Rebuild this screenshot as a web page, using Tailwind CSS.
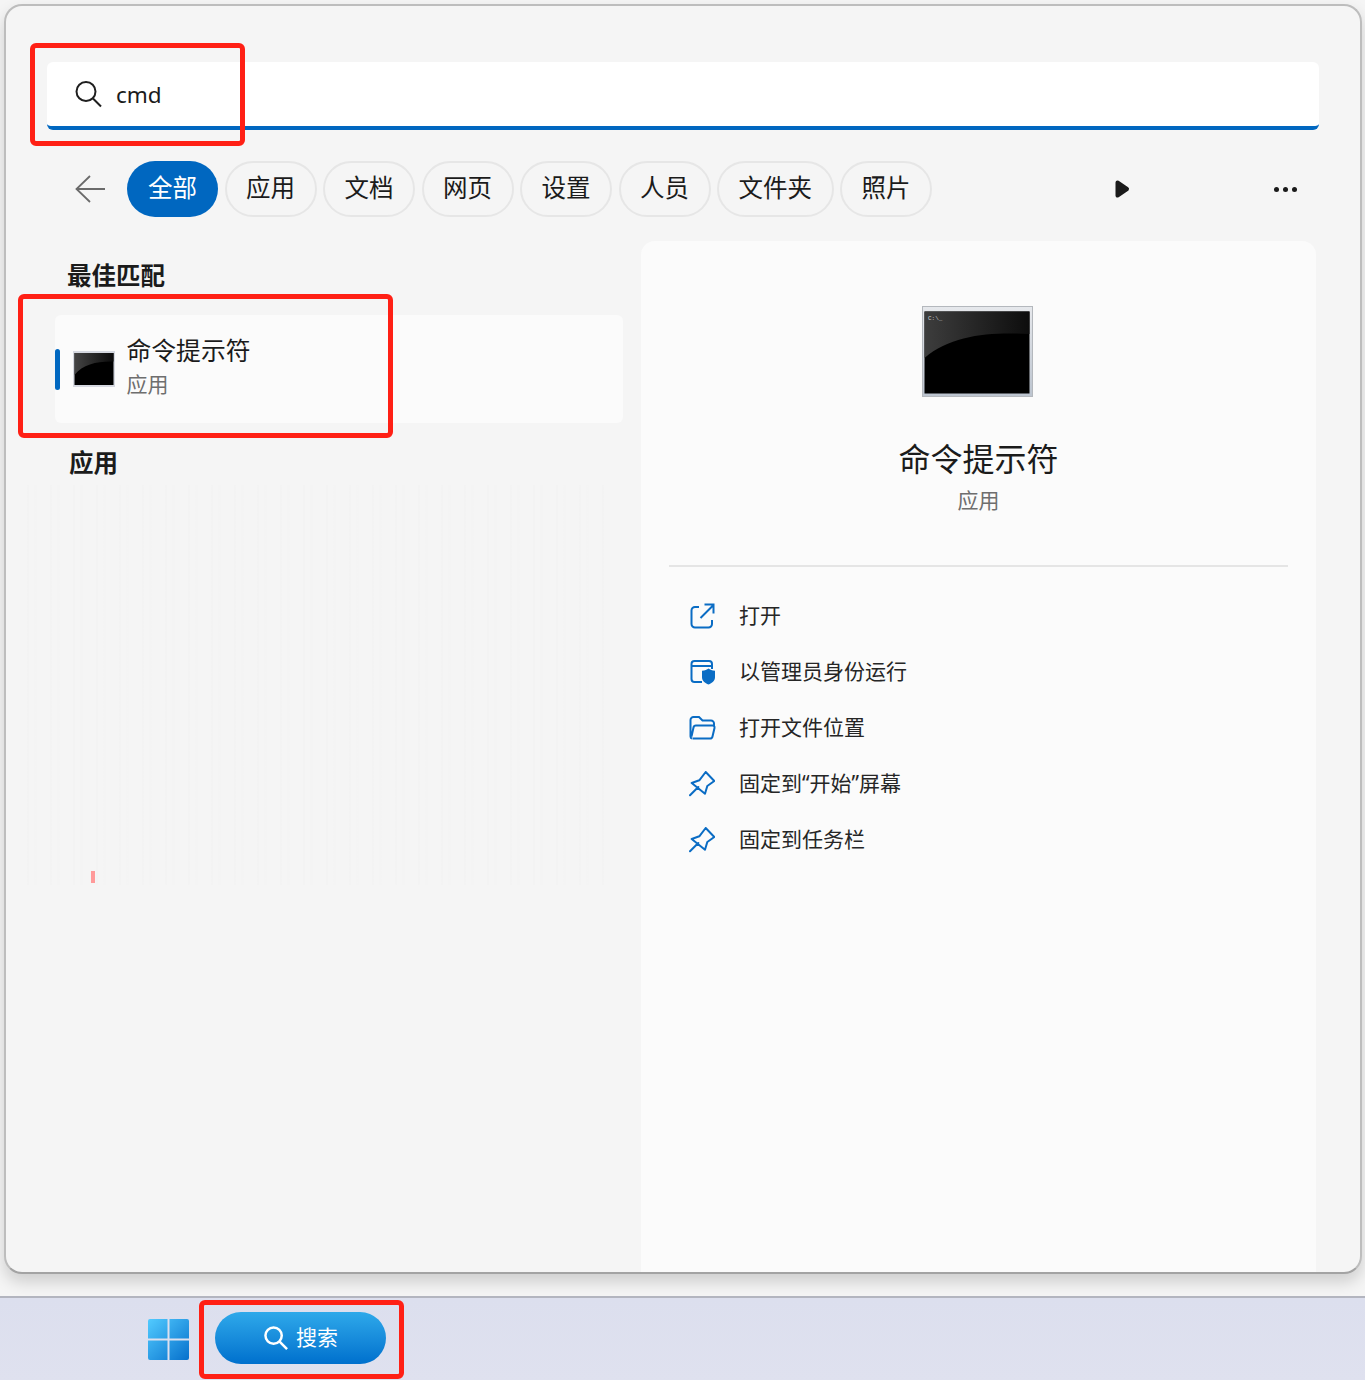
<!DOCTYPE html>
<html lang="zh">
<head>
<meta charset="utf-8">
<title>cmd</title>
<script src="https://cdn.jsdelivr.net/npm/@tailwindcss/browser@4"></script>
</head>
<body class="m-0 bg-[#f5f5f5] font-['Noto_Sans','Noto_Sans_CJK_SC',sans-serif] text-[#1b1b1b]">
<div class="relative flex h-[1380px] w-[1365px] flex-col overflow-hidden">

  <!-- search window -->
  <div class="pt-[4px] pl-[4px] pr-[3px]">
    <div class="flex h-[1270px] flex-col overflow-hidden rounded-[18px] border-2 border-[#bdbdbd] border-b-[#a3a3a3] bg-[#f5f5f5] pt-[56px] shadow-[0_8px_16px_rgba(0,0,0,0.16)]">

      <!-- input -->
      <div class="mx-[41px] flex h-[68px] shrink-0 items-center rounded-[6px] border-b-[4px] border-[#0067c0] bg-white pl-[27px]">
        <svg class="h-[28px] w-[28px]" viewBox="0 0 28 28" fill="none" stroke="#1f1f1f" stroke-width="2"><circle cx="12" cy="11.500" r="9.500"/><path d="M19 18.500l8 8"/></svg>
        <span class="mt-[2px] ml-[14px] text-[22.5px] leading-none">cmd</span>
      </div>

      <!-- filters -->
      <div class="mt-[31px] ml-[69px] flex h-[56px] shrink-0 items-center">
        <svg class="mr-[21px] h-[30px] w-[31px]" viewBox="0 0 31 30" fill="none" stroke="#6b6b6b" stroke-width="1.800"><path d="M30 15H2M15 2L1.500 15 15 28"/></svg>
        <div class="flex items-center gap-[6.500px] text-[24.5px] leading-[30px]">
          <span class="flex h-[56px] items-center rounded-full bg-[#0067c0] px-[21px] pb-[2px] text-white">全部</span>
          <span class="flex h-[56px] items-center rounded-full border-2 border-[#e6e6e6] px-[19.500px] pb-[2px]">应用</span>
          <span class="flex h-[56px] items-center rounded-full border-2 border-[#e6e6e6] px-[19.500px] pb-[2px]">文档</span>
          <span class="flex h-[56px] items-center rounded-full border-2 border-[#e6e6e6] px-[19.500px] pb-[2px]">网页</span>
          <span class="flex h-[56px] items-center rounded-full border-2 border-[#e6e6e6] px-[19.500px] pb-[2px]">设置</span>
          <span class="flex h-[56px] items-center rounded-full border-2 border-[#e6e6e6] px-[19.500px] pb-[2px]">人员</span>
          <span class="flex h-[56px] items-center rounded-full border-2 border-[#e6e6e6] px-[19.500px] pb-[2px]">文件夹</span>
          <span class="flex h-[56px] items-center rounded-full border-2 border-[#e6e6e6] px-[19.500px] pb-[2px]">照片</span>
        </div>
        <svg class="ml-[182px] h-[20px] w-[16px]" viewBox="0 0 16 20"><path d="M3.500 3.500L13 10 3.500 16.500Z" fill="#1a1a1a" stroke="#1a1a1a" stroke-width="4" stroke-linejoin="round"/></svg>
        <div class="ml-[144px] flex gap-[4px]">
          <span class="h-[5px] w-[5px] rounded-full bg-[#1a1a1a]"></span>
          <span class="h-[5px] w-[5px] rounded-full bg-[#1a1a1a]"></span>
          <span class="h-[5px] w-[5px] rounded-full bg-[#1a1a1a]"></span>
        </div>
      </div>

      <!-- results + preview -->
      <div class="mt-[24px] flex min-h-0 flex-1">
        <div class="relative ml-[49px] w-[568px]">
          <h3 class="mt-[17px] ml-[12px] text-[24.5px] leading-[36px] font-bold">最佳匹配</h3>
          <div class="relative mt-[21px] flex h-[108px] items-center rounded-[6px] bg-[#fbfbfb] pl-[18px]">
            <span class="absolute top-[34px] left-0 h-[41px] w-[5px] rounded-full bg-[#0067c0]"></span>
            <svg class="h-[36px] w-[42px]" viewBox="0 0 42 36">
              <defs>
                <linearGradient id="smallGlow" x1="0" y1="0" x2="1" y2="0"><stop offset="0" stop-color="#444"/><stop offset="1" stop-color="#0b0b0b"/></linearGradient>
              </defs>
              <rect width="42" height="36" fill="#d5d8e0"/>
              <rect x="1.500" y="2" width="39" height="32" fill="#000"/>
              <path d="M1.500 2H40.500V10.500C25 10 10 13 1.500 24Z" fill="url(#smallGlow)"/>
            </svg>
            <div class="mb-[8px] ml-[11.500px]">
              <div class="text-[24.8px] leading-[36px]">命令提示符</div>
              <div class="mt-[1px] text-[21px] leading-[30px] text-[#6e6e6e]">应用</div>
            </div>
          </div>
          <h3 class="mt-[22px] ml-[14px] text-[24.5px] leading-[36px] font-bold">应用</h3>
          <!-- blurred result rows -->
          <div class="absolute top-[244px] left-[-28px] h-[400px] w-[580px] bg-[repeating-linear-gradient(90deg,rgba(0,0,0,0.006)_0_2px,transparent_2px_7px,rgba(0,0,0,0.004)_7px_10px,transparent_10px_23px)]"></div>
          <span class="absolute top-[630px] left-[36px] h-[12px] w-[4px] bg-[#ff9a9a]"></span>
        </div>

        <div class="ml-[18px] flex w-[675px] flex-col items-center rounded-t-[14px] bg-[#fbfbfb] pt-[65px]">
          <svg class="mr-[2px] h-[91px] w-[111px]" viewBox="0 0 111 91">
            <defs>
              <linearGradient id="bigGlow" x1="0" y1="0" x2="1" y2="0"><stop offset="0" stop-color="#3d3d3d"/><stop offset="1" stop-color="#0d0d0d"/></linearGradient>
              <linearGradient id="bigFrame" x1="0" y1="0" x2="0" y2="1"><stop offset="0" stop-color="#e6e8ec"/><stop offset="1" stop-color="#bcc4cf"/></linearGradient>
            </defs>
            <rect x="0.500" y="0.500" width="110" height="90" fill="url(#bigFrame)" stroke="#b4b8bd"/>
            <rect x="2.500" y="5.500" width="105" height="82" fill="#000"/>
            <path d="M2.500 5.500H107.500V28C70 26 30 28 2.500 52Z" fill="url(#bigGlow)"/>
            <text x="6" y="14" font-family="Liberation Mono" font-size="6" fill="#cfcfcf">C:\_</text>
          </svg>
          <div class="mt-[36px] text-[32px] leading-[52px]">命令提示符</div>
          <div class="text-[21px] leading-[30px] text-[#6e6e6e]">应用</div>
          <div class="mt-[50px] h-[2px] w-[619px] bg-[#e5e5e5]"></div>

          <!-- actions -->
          <div class="mt-[21px] flex w-[619px] flex-col text-[21px] text-[#262626]">
            <div class="flex h-[56px] items-center">
              <svg class="ml-[20px] h-[26px] w-[26px]" viewBox="0 0 26 26" fill="none" stroke="#0a6cc4" stroke-width="2"><path d="M10 4H6a3.500 3.500 0 0 0-3.500 3.500V21A3.500 3.500 0 0 0 6 24.500h13.500A3.500 3.500 0 0 0 23 21v-4M11.500 15L24 2.500M15.500 1.500H24.500V10.500"/></svg>
              <span class="ml-[24px]">打开</span>
            </div>
            <div class="flex h-[56px] items-center">
              <svg class="ml-[20px] h-[26px] w-[26px]" viewBox="0 0 26 26"><path d="M13 23H5.500A3 3 0 0 1 2.500 20V5A3 3 0 0 1 5.500 2H20a3 3 0 0 1 3 3v5M2.500 7H23" fill="none" stroke="#0a6cc4" stroke-width="2"/><path d="M19.500 9.500c1.500 1.300 3.500 2 6.500 2.200v6.500c0 3.500-3 5.800-6.500 7.300-3.500-1.500-6.500-3.800-6.500-7.300v-6.500c3-.2 5-.9 6.500-2.200Z" fill="#0a6cc4"/></svg>
              <span class="ml-[24px]">以管理员身份运行</span>
            </div>
            <div class="flex h-[56px] items-center">
              <svg class="ml-[20px] h-[24px] w-[27px]" viewBox="0 0 27 24" fill="none" stroke="#0a6cc4" stroke-width="2"><path d="M3 22.500A2 2 0 0 1 1.500 20.500V4A3 3 0 0 1 4.500 1h5.500l3.500 3.500H22a3 3 0 0 1 3 3v2M3.500 22.500H21a2.500 2.500 0 0 0 2.500-2L25.500 12A2 2 0 0 0 23.500 9.500H7a2.500 2.500 0 0 0-2.500 2L2.500 20.500"/></svg>
              <span class="ml-[23px]">打开文件位置</span>
            </div>
            <div class="flex h-[56px] items-center">
              <svg class="ml-[20px] h-[26px] w-[26px]" viewBox="0 0 26 26" fill="none" stroke="#0a6cc4" stroke-width="2" stroke-linejoin="round" stroke-linecap="round"><path d="M1 24.300L9.300 16M16.700 1L25.300 10 18.300 15 16 22.700 2.700 12 10.300 9.300Z"/></svg>
              <span class="ml-[24px]">固定到“开始”屏幕</span>
            </div>
            <div class="flex h-[56px] items-center">
              <svg class="ml-[20px] h-[26px] w-[26px]" viewBox="0 0 26 26" fill="none" stroke="#0a6cc4" stroke-width="2" stroke-linejoin="round" stroke-linecap="round"><path d="M1 24.300L9.300 16M16.700 1L25.300 10 18.300 15 16 22.700 2.700 12 10.300 9.300Z"/></svg>
              <span class="ml-[24px]">固定到任务栏</span>
            </div>
          </div>
        </div>
      </div>
    </div>
  </div>

  <!-- taskbar -->
  <div class="mt-[22px] flex h-[84px] shrink-0 items-start border-t-2 border-[#b3b5bf] bg-gradient-to-b from-[#dcdfee] to-[#dfe1ef] pl-[148px]">
    <svg class="mt-[21px] h-[41px] w-[41px]" viewBox="0 0 41 42" preserveAspectRatio="none">
      <defs>
        <linearGradient id="winTile" x1="0" y1="0" x2="1" y2="1"><stop offset="0" stop-color="#52cbff"/><stop offset="1" stop-color="#0670cc"/></linearGradient>
      </defs>
      <path d="M2 0H19.500V20H0V2A2 2 0 0 1 2 0ZM21.500 0H39A2 2 0 0 1 41 2V20H21.500ZM0 22H19.500V42H2A2 2 0 0 1 0 40ZM21.500 22H41V40A2 2 0 0 1 39 42H21.500Z" fill="url(#winTile)"/>
    </svg>
    <div class="mt-[14px] ml-[26px] flex h-[52px] w-[171px] items-center rounded-full bg-gradient-to-b from-[#2ea9ea] to-[#0070cd] pl-[49px] text-[21px] text-white">
      <svg class="h-[24px] w-[24px]" viewBox="0 0 25 25" fill="none" stroke="#fff" stroke-width="2.600"><circle cx="10" cy="10" r="8.500"/><path d="M16 16l8 8"/></svg>
      <span class="ml-[8px]">搜索</span>
    </div>
  </div>

  <!-- red annotation frames -->
  <div class="absolute top-[43px] left-[30px] h-[103px] w-[215px] rounded-[6px] border-[5px] border-[#ff2015]"></div>
  <div class="absolute top-[294px] left-[18px] h-[144px] w-[375px] rounded-[6px] border-[5px] border-[#ff2015]"></div>
  <div class="absolute top-[1300px] left-[199px] h-[79px] w-[205px] rounded-[6px] border-[5px] border-[#ff2015]"></div>
</div>
</body>
</html>
